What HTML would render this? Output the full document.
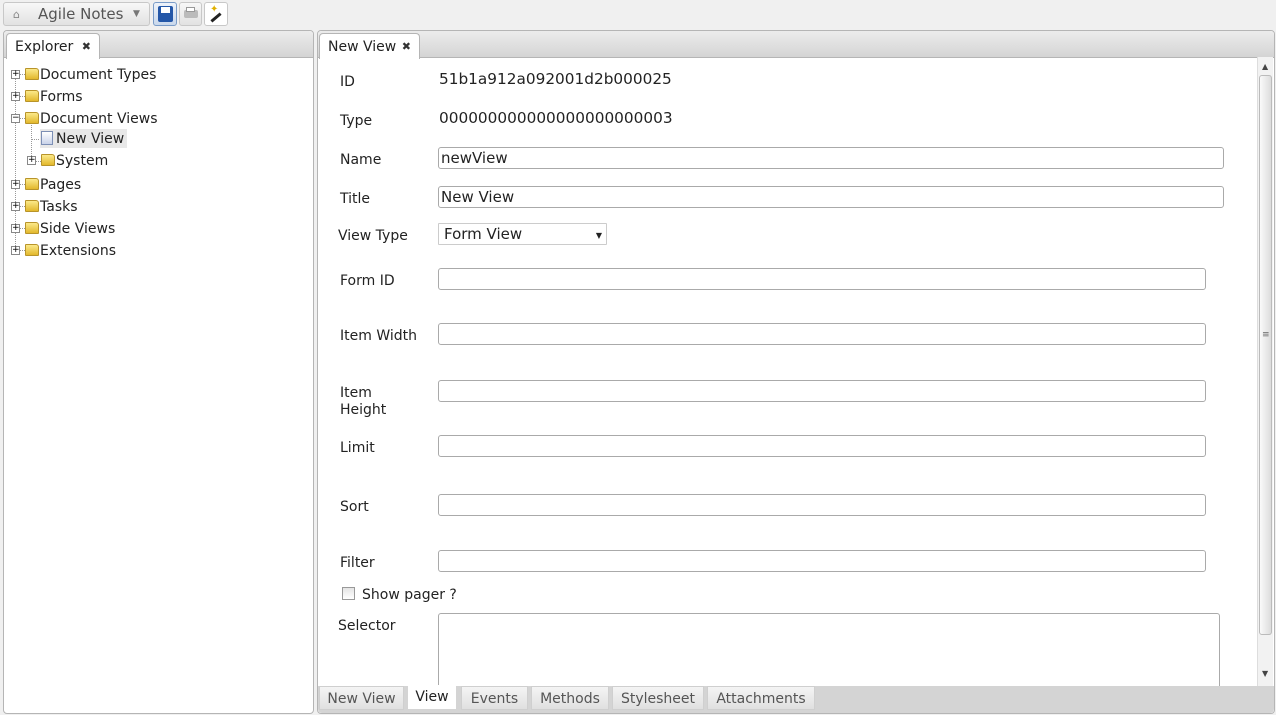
<!DOCTYPE html>
<html><head><style>
*{box-sizing:border-box;margin:0;padding:0}
body{width:1276px;height:715px;background:#f0f0f0;font-family:"DejaVu Sans","Liberation Sans",sans-serif;color:#222;position:relative;overflow:hidden}
.abs{position:absolute}
.btn{position:absolute;top:2px;height:24px;border:1px solid #c8c8c8;border-radius:3px;background:linear-gradient(#f8f8f8,#e2e2e2)}
.panel{position:absolute;border:1px solid #b5b5b5;border-radius:4px;background:#fff}
.hdr{position:absolute;left:0;right:0;top:0;height:27px;background:linear-gradient(#ececec,#d4d4d4);border-bottom:1px solid #b5b5b5;border-radius:4px 4px 0 0}
.tab{position:absolute;top:2px;height:26px;background:#fff;border:1px solid #b5b5b5;border-bottom:none;border-radius:4px 4px 0 0;font-size:14px;padding:5px 0 0 8px}
.x{position:absolute;right:8px;top:6px;font-size:11px;font-weight:bold;color:#333}
.tree{position:absolute;font-size:14px;color:#222}
.row{position:absolute;white-space:nowrap;height:20px;line-height:20px}
.pm{position:absolute;width:9px;height:9px;border:1px solid #888;background:#fff;font-size:9px;line-height:7px;text-align:center;color:#000;z-index:2}
.fold{display:inline-block;width:14px;height:12px;background:linear-gradient(#fbe98a,#e2b82c);border:1px solid #b8942a;border-radius:1px 3px 1px 1px;vertical-align:-1px;margin-right:1px}
.dv{position:absolute;border-left:1px dotted #999}
.dh{position:absolute;border-top:1px dotted #999}
.lbl{position:absolute;font-size:14px;color:#222}
.val{position:absolute;font-size:15.3px;color:#222}
.inp{position:absolute;height:22px;border:1px solid #aaa;border-radius:3px;background:#fff;font-size:15px;padding:1px 2px;line-height:18px}
.btab{position:absolute;top:686px;height:24px;background:linear-gradient(#f4f4f4,#e0e0e0);border:1px solid #cfcfcf;font-size:14px;color:#555;padding:4px 0 0 0;text-align:center}
</style></head><body>
<div class="btn" style="left:3px;width:147px"><span class="abs" style="left:9px;top:5px;font-size:11px;color:#888">⌂</span><span class="abs" style="left:34px;top:2px;font-size:15px;color:#555">Agile Notes</span><span class="abs" style="left:129px;top:6px;font-size:9px;color:#777">▼</span></div>
<div class="btn" style="left:153px;width:24px;border-color:#7a9cc8;background:linear-gradient(#eef3fa,#c9d8ec)"><div class="abs" style="left:4px;top:3px;width:15px;height:16px;background:#2457a8;border-radius:2px"></div><div class="abs" style="left:7px;top:4px;width:9px;height:6px;background:#fff"></div></div>
<div class="btn" style="left:179px;width:23px"><div class="abs" style="left:4px;top:7px;width:14px;height:8px;background:#bbb;border-radius:2px"></div><div class="abs" style="left:6px;top:4px;width:9px;height:5px;background:#fff;border:1px solid #999"></div></div>
<div class="btn" style="left:204px;width:24px;background:#fff"><div class="abs" style="left:5px;top:13px;width:12px;height:3px;background:#222;transform:rotate(-40deg)"></div><span class="abs" style="left:5px;top:1px;font-size:10px;color:#e0b000">✦</span></div>

<div class="panel" style="left:3px;top:30px;width:311px;height:684px">
 <div class="hdr"></div>
 <div class="tab" style="left:2px;width:94px">Explorer<span class="x">✖</span></div>
</div>
<div class="tree" style="left:0;top:0">
 <div class="dv" style="left:15px;top:74px;height:176px"></div>
 <div class="dv" style="left:31px;top:122px;height:38px"></div>
 <div class="dh" style="left:15px;top:74px;width:10px"></div>
 <div class="dh" style="left:15px;top:96px;width:10px"></div>
 <div class="dh" style="left:15px;top:118px;width:10px"></div>
 <div class="dh" style="left:31px;top:139px;width:10px"></div>
 <div class="dh" style="left:31px;top:161px;width:10px"></div>
 <div class="dh" style="left:15px;top:184px;width:10px"></div>
 <div class="dh" style="left:15px;top:206px;width:10px"></div>
 <div class="dh" style="left:15px;top:228px;width:10px"></div>
 <div class="dh" style="left:15px;top:250px;width:10px"></div>
 <div class="pm" style="left:11px;top:70px">+</div><div class="row" style="left:25px;top:65px"><span class="fold"></span>Document Types</div>
 <div class="pm" style="left:11px;top:92px">+</div><div class="row" style="left:25px;top:87px"><span class="fold"></span>Forms</div>
 <div class="pm" style="left:11px;top:114px">−</div><div class="row" style="left:25px;top:109px"><span class="fold"></span>Document Views</div>
 <div class="abs" style="left:40px;top:129px;width:87px;height:19px;background:#e8e8e8"></div>
 <div class="row" style="left:41px;top:129px"><span style="display:inline-block;width:12px;height:14px;border:1px solid #7c8fb5;background:linear-gradient(#fff,#c9d3ea);vertical-align:-2px;margin-right:3px"></span>New View</div>
 <div class="pm" style="left:27px;top:156px">+</div><div class="row" style="left:41px;top:151px"><span class="fold"></span>System</div>
 <div class="pm" style="left:11px;top:180px">+</div><div class="row" style="left:25px;top:175px"><span class="fold"></span>Pages</div>
 <div class="pm" style="left:11px;top:202px">+</div><div class="row" style="left:25px;top:197px"><span class="fold"></span>Tasks</div>
 <div class="pm" style="left:11px;top:224px">+</div><div class="row" style="left:25px;top:219px"><span class="fold"></span>Side Views</div>
 <div class="pm" style="left:11px;top:246px">+</div><div class="row" style="left:25px;top:241px"><span class="fold"></span>Extensions</div>
</div>

<div class="panel" style="left:317px;top:30px;width:958px;height:684px;background:#fff">
 <div class="hdr"></div>
 <div class="tab" style="left:1px;width:101px">New View<span class="x">✖</span></div>
</div>

<div class="lbl" style="left:340px;top:74px">ID</div><div class="val" style="left:439px;top:70px">51b1a912a092001d2b000025</div>
<div class="lbl" style="left:340px;top:113px">Type</div><div class="val" style="left:439px;top:109px">000000000000000000000003</div>
<div class="lbl" style="left:340px;top:152px">Name</div><div class="inp" style="left:438px;top:147px;width:786px">newView</div>
<div class="lbl" style="left:340px;top:191px">Title</div><div class="inp" style="left:438px;top:186px;width:786px">New View</div>
<div class="lbl" style="left:338px;top:228px">View Type</div><div class="inp" style="left:438px;top:223px;width:169px;border-color:#ccc;border-radius:1px;padding-left:5px">Form View<span class="abs" style="right:4px;top:3px;font-size:8px">▼</span></div>
<div class="lbl" style="left:340px;top:273px">Form ID</div><div class="inp" style="left:438px;top:268px;width:768px"></div>
<div class="lbl" style="left:340px;top:328px">Item Width</div><div class="inp" style="left:438px;top:323px;width:768px"></div>
<div class="lbl" style="left:340px;top:385px;line-height:17px">Item<br>Height</div><div class="inp" style="left:438px;top:380px;width:768px"></div>
<div class="lbl" style="left:340px;top:440px">Limit</div><div class="inp" style="left:438px;top:435px;width:768px"></div>
<div class="lbl" style="left:340px;top:499px">Sort</div><div class="inp" style="left:438px;top:494px;width:768px"></div>
<div class="lbl" style="left:340px;top:555px">Filter</div><div class="inp" style="left:438px;top:550px;width:768px"></div>
<div class="abs" style="left:342px;top:587px;width:13px;height:13px;border:1px solid #999;background:linear-gradient(#e4e4e4,#fff)"></div>
<div class="lbl" style="left:362px;top:587px">Show pager ?</div>
<div class="lbl" style="left:338px;top:618px">Selector</div>
<div class="abs" style="left:438px;top:613px;width:782px;height:80px;border:1px solid #aaa;border-radius:3px;background:#fff"></div>

<div class="abs" style="left:1257px;top:57px;width:16px;height:629px;background:#f2f2f2;border-left:1px solid #ddd">
 <div class="abs" style="left:4px;top:5px;font-size:8px;color:#444">▲</div>
 <div class="abs" style="left:1px;top:18px;width:13px;height:560px;border:1px solid #bbb;border-radius:3px;background:linear-gradient(90deg,#fafafa,#dcdcdc)"></div>
 <div class="abs" style="left:4px;top:273px;font-size:9px;color:#666">≡</div>
 <div class="abs" style="left:4px;top:612px;font-size:8px;color:#444">▼</div>
</div>

<div class="abs" style="left:318px;top:686px;width:956px;height:27px;background:#d4d4d4;border-radius:0 0 4px 4px"></div>
<div class="btab" style="left:319px;width:85px">New View</div>
<div class="btab" style="left:408px;width:48px;background:#fff;color:#222;border-color:#fff;top:685px;padding-top:3px">View</div>
<div class="btab" style="left:461px;width:67px">Events</div>
<div class="btab" style="left:531px;width:78px">Methods</div>
<div class="btab" style="left:612px;width:92px">Stylesheet</div>
<div class="btab" style="left:707px;width:108px">Attachments</div>
</body></html>
